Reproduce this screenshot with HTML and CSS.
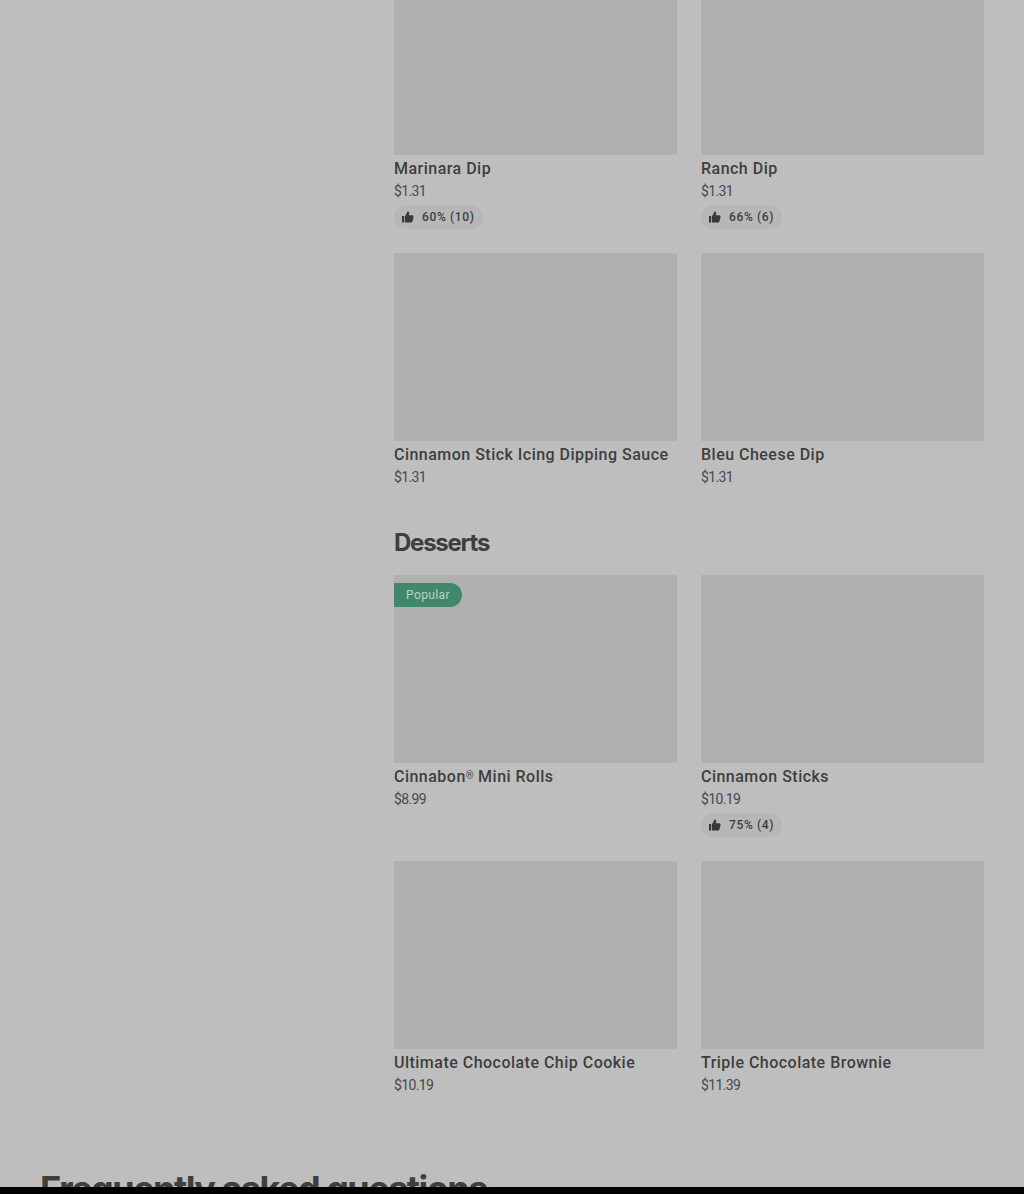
FILE: index.html
```html
<!DOCTYPE html>
<html lang="en">

<head>
    <meta charset="UTF-8">
    <meta name="viewport" content="width=device-width, initial-scale=1.0">
    <title>Store Menu</title>
    <link rel="stylesheet" href="styles.css">
</head>

<body>

    <!-- Thumbs up icon shared by the ratings -->
    <svg class="icon-defs" width="0" height="0">
        <symbol id="thumb-up" viewBox="0 0 12 12">
            <path d="M0 5h2.2v6.5H0zM3 5.2 5.6.5c1.2 0 1.9.9 1.6 2L6.8 4.3h3.4c1 0 1.5.7 1.3 1.6l-1 4.3c-.2.8-.8 1.3-1.6 1.3H3z" />
        </symbol>
    </svg>

    <div class="page">
        <main class="menu">
            <!-- Dips -->
            <section class="item-grid dips">
                <article class="item">
                    <div class="item-image"></div>
                    <h3 class="item-name">Marinara Dip</h3>
                    <p class="item-price">$1.31</p>
                    <span class="rating"><svg class="thumb"><use href="#thumb-up" /></svg>60% (10)</span>
                </article>
                <article class="item">
                    <div class="item-image"></div>
                    <h3 class="item-name">Ranch Dip</h3>
                    <p class="item-price">$1.31</p>
                    <span class="rating"><svg class="thumb"><use href="#thumb-up" /></svg>66% (6)</span>
                </article>
                <article class="item">
                    <div class="item-image"></div>
                    <h3 class="item-name">Cinnamon Stick Icing Dipping Sauce</h3>
                    <p class="item-price">$1.31</p>
                </article>
                <article class="item">
                    <div class="item-image"></div>
                    <h3 class="item-name">Bleu Cheese Dip</h3>
                    <p class="item-price">$1.31</p>
                </article>
            </section>

            <!-- Desserts -->
            <h2 class="section-title">Desserts</h2>
            <section class="item-grid">
                <article class="item">
                    <div class="item-image"><span class="badge">Popular</span></div>
                    <h3 class="item-name">Cinnabon<span class="reg">®</span> Mini Rolls</h3>
                    <p class="item-price">$8.99</p>
                </article>
                <article class="item">
                    <div class="item-image"></div>
                    <h3 class="item-name">Cinnamon Sticks</h3>
                    <p class="item-price">$10.19</p>
                    <span class="rating"><svg class="thumb"><use href="#thumb-up" /></svg>75% (4)</span>
                </article>
                <article class="item">
                    <div class="item-image"></div>
                    <h3 class="item-name">Ultimate Chocolate Chip Cookie</h3>
                    <p class="item-price">$10.19</p>
                </article>
                <article class="item">
                    <div class="item-image"></div>
                    <h3 class="item-name">Triple Chocolate Brownie</h3>
                    <p class="item-price">$11.39</p>
                </article>
            </section>
        </main>

        <h2 class="faq-title">Frequently asked questions</h2>
    </div>
    <div class="bottom-bar"></div>

</body>

</html>
```

FILE: styles.css
```css
* {
    box-sizing: border-box;
}

body {
    margin: 0;
    height: 1194px;
    display: flex;
    flex-direction: column;
    overflow: hidden;
    background-color: #bebebe;
    color: #3e3e3e;
    font-family: Roboto, sans-serif;
}

h2,
h3,
p {
    margin: 0;
}

.icon-defs {
    display: none;
}

.page {
    height: 1187px;
    padding: 0 40px;
    overflow: hidden;
}

.bottom-bar {
    height: 7px;
    background-color: #000;
}

.menu {
    margin-left: 354px;
}

.item-grid {
    display: grid;
    grid-template-columns: 283px 283px;
    column-gap: 24px;
    row-gap: 24px;
    grid-auto-rows: 262px;
}

/* First row is scrolled partly out of view */
.dips {
    grid-template-rows: 229px;
}

.dips .item:nth-child(-n+2) .item-image {
    height: 155px;
}

.item-image {
    height: 188px;
    padding-top: 8px;
    background-color: #b0b0b0;
}

.item-name {
    padding-top: 2px;
    font-size: 16px;
    line-height: 24px;
    font-weight: 500;
    letter-spacing: 0.48px;
    white-space: nowrap;
}

.reg {
    font-size: 10px;
    line-height: 1;
    vertical-align: 3px;
    letter-spacing: 0;
}

.item-price {
    font-size: 14px;
    line-height: 20px;
    letter-spacing: -0.65px;
    color: #484848;
}

.rating {
    display: inline-flex;
    align-items: center;
    height: 24px;
    margin-top: 4px;
    padding: 0 8px;
    border-radius: 12px;
    background-color: #b7b7b7;
    font-size: 12px;
    font-weight: 500;
    letter-spacing: 0.65px;
}

.thumb {
    width: 12px;
    height: 12px;
    margin-right: 8px;
    fill: #383838;
}

.badge {
    display: flex;
    align-items: center;
    width: 68px;
    height: 24px;
    padding-left: 12px;
    border-radius: 0 12px 12px 0;
    background-color: #408869;
    color: #bfd0c7;
    font-size: 12px;
    letter-spacing: 0.4px;
}

.section-title {
    height: 60px;
    padding-top: 12px;
    font-family: Inter, sans-serif;
    font-size: 24px;
    line-height: 32px;
    font-weight: 700;
    letter-spacing: -1.25px;
}

.faq-title {
    padding-top: 44px;
    font-family: Inter, sans-serif;
    font-size: 36px;
    line-height: 44px;
    font-weight: 700;
    letter-spacing: -1.52px;
}
```
